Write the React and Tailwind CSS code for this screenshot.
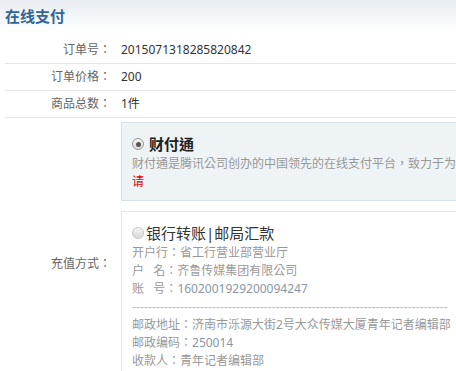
const font = { fontFamily: '"Noto Sans", "Noto Sans CJK TC", sans-serif' };

const Row = ({ label, children }) => (
  <div className="flex border-b border-[#e6e6e6] h-[27px] items-center">
    <div className="w-[106px] shrink-0 text-right text-[#666] text-[12px]">{label}</div>
    <div className="pl-[10px] text-[#333] text-[12px]">{children}</div>
  </div>
);

const Radio = ({ checked }) => (
  <span
    className={`inline-flex items-center justify-center w-[12px] h-[12px] rounded-full border shrink-0 bg-gradient-to-b from-[#f4f4f4] to-[#d8d8d8] ${
      checked ? 'border-[#9a9a9a]' : 'border-[#c4c4c4]'
    }`}
  >
    {checked && <span className="w-[5px] h-[5px] rounded-full bg-[#555]" />}
  </span>
);

export default function App() {
  const dashes = '-'.repeat(79);
  return (
    <div className="w-[456px] h-[371px] overflow-hidden bg-white" style={font}>
      <div className="h-[32px] bg-gradient-to-b from-[#e7edf2] to-white px-[5px] pt-[6px]">
        <h2 className="text-[15px] font-bold text-[#336699] leading-[20px]">在线支付</h2>
      </div>
      <div className="ml-[5px] w-[700px] pt-[5px]">
        <Row label="订单号：">2015071318285820842</Row>
        <Row label="订单价格：">200</Row>
        <Row label="商品总数：">1件</Row>
        <div className="flex items-center">
          <div className="w-[106px] shrink-0 text-right text-[#666] text-[12px]">充值方式：</div>
          <div className="pl-[10px] pt-[4px] pb-[4px] flex-1">
            <div className="border border-[#d5e2ec] bg-[#eef3f6] pl-[10px] pt-[10px] pb-[9px]">
              <div className="flex items-center h-[22px]">
                <Radio checked />
                <span className="ml-[5px] text-[15px] font-bold text-[#222]">财付通</span>
              </div>
              <div className="text-[12px] leading-[18px] text-[#999] whitespace-nowrap">
                财付通是腾讯公司创办的中国领先的在线支付平台，致力于为互联网用户和企业提供安全、便捷、专业的在线支付服务。
              </div>
              <div className="text-[12px] leading-[18px] text-[#e00000]">请</div>
            </div>
            <div className="mt-[10px] border border-[#e1e7ec] bg-white pl-[10px] pt-[10px] pb-[35px]">
              <div className="flex items-center h-[22px]">
                <Radio />
                <span className="ml-[2px] text-[15px] text-[#333]">银行转账|邮局汇款</span>
              </div>
              <div className="text-[12px] leading-[18px] text-[#999]">
                <div>开户行：省工行营业部营业厅</div>
                <div>户&nbsp;&nbsp;&nbsp;名：齐鲁传媒集团有限公司</div>
                <div>账&nbsp;&nbsp;&nbsp;号：<span className="text-[#8a97a5]">1602001929200094247</span></div>
                <div className="text-[#bbb] whitespace-nowrap" style={{ fontFamily: '"Liberation Sans", sans-serif' }}>{dashes}</div>
                <div>邮政地址：济南市泺源大街2号大众传媒大厦青年记者编辑部</div>
                <div>邮政编码：<span className="text-[#8a97a5]">250014</span></div>
                <div>收款人：青年记者编辑部</div>
              </div>
            </div>
          </div>
        </div>
      </div>
    </div>
  );
}
